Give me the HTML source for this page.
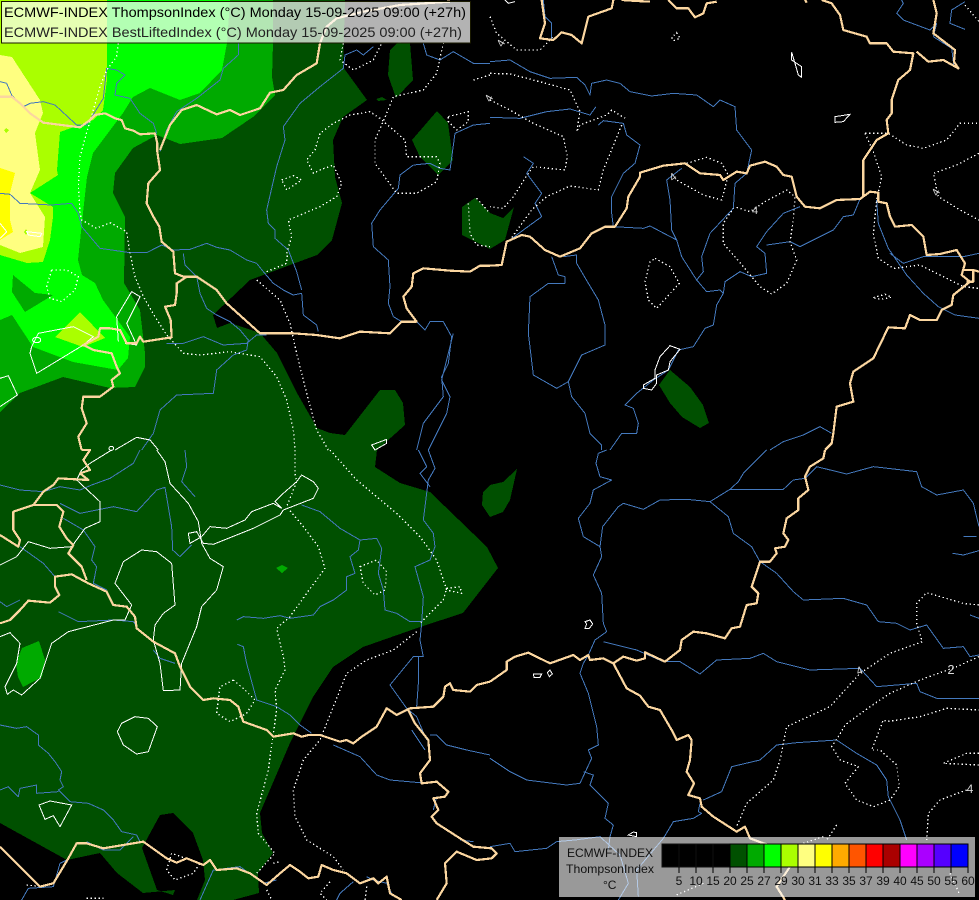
<!DOCTYPE html>
<html><head><meta charset="utf-8"><title>ECMWF-INDEX ThompsonIndex</title>
<style>
html,body{margin:0;padding:0;background:#000;width:979px;height:900px;overflow:hidden}
svg{display:block;position:absolute;left:0;top:0}
polyline,polygon.l,ellipse.l{fill:none;stroke-linejoin:round}
.map{shape-rendering:crispEdges}
.r polyline{stroke:#4479bd;stroke-width:3}
.w polyline,.w polygon,.w ellipse{fill:none;stroke:#fff;stroke-width:3}
.d polyline,.d polygon{fill:none;stroke:#fff;stroke-width:4;stroke-dasharray:4 8}
.b polyline{stroke:#fbd6a0;stroke-width:6.6}
text{font-family:"Liberation Sans",Arial,sans-serif}
</style></head><body>
<svg width="979" height="900" viewBox="0 0 979 900" xmlns="http://www.w3.org/2000/svg">
<rect width="979" height="900" fill="#000"/>
<g class="map">
<polygon fill="#005000" points="345,0 343,67 367,100 343,117 333,140 335,177 342,203 332,240 317,255 290,265 250,280 213,315 217,328 230,323 260,333 277,353 297,393 317,428 330,433 345,435 380,390 395,390 403,403 405,425 377,450 375,467 400,483 430,492 487,547 498,568 463,613 420,627 363,647 333,667 313,697 290,743 260,813 262,833 273,853 258,873 259,893 233,900 197,900 205,880 203,860 193,833 173,813 160,815 142,848 157,890 173,895 175,890 143,893 117,873 100,853 67,860 0,823 0,0"/>
<polygon fill="#005000" points="390,50 398,42 410,43 413,80 396,98 388,75"/>
<polygon fill="#005000" points="376,99 382,97 387,100 378,101"/>
<polygon fill="#005000" points="412,140 437,111 448,123 453,160 438,175 420,157"/>
<polygon fill="#005000" points="462,207 475,198 490,213 503,218 514,207 505,240 490,249 462,235"/>
<polygon fill="#005000" points="670,370 690,387 703,405 709,423 700,428 682,417 670,403 659,385"/>
<polygon fill="#005000" points="483,492 490,485 503,482 517,469 510,500 503,512 490,517 482,505"/>
<polygon fill="#00aa00" points="273,0 273,43 272,77 275,95 253,117 222,138 180,144 157,135 133,148 115,173 113,193 125,217 124,283 140,310 145,353 145,367 135,387 110,388 63,377 20,393 0,412 0,0"/>
<polygon fill="#00ff00" points="230,0 227,43 222,70 200,93 180,100 150,88 133,97 123,113 93,153 87,177 83,213 78,260 82,275 95,283 103,300 130,337 128,358 118,370 73,362 33,347 12,315 0,320 0,0"/>
<polygon fill="#00aa00" points="13,275 35,293 53,295 25,312 12,292"/>
<polygon fill="#aaff00" points="107,0 107,80 103,110 93,120 60,132 57,170 58,175 30,193 53,207 53,217 50,240 43,262 27,263 0,255 0,0"/>
<polygon fill="#aaff00" points="55,337 80,312 105,338 83,347"/>
<polygon fill="#ffff80" points="0,55 12,57 40,100 43,113 35,133 40,170 30,193 45,217 43,247 20,253 0,245"/>
<polygon fill="#ffff00" points="0,168 15,173 10,193 10,220 13,232 0,240"/>
<polygon fill="#aaff00" points="4,130 6,128 9,130 6,133"/>
<polygon fill="#aaff00" points="24,232 26,229 28,232 26,235"/>
<polygon fill="#00aa00" points="22,648 39,641 45,660 42,677 23,687 18,677 16,663"/>
<polygon fill="#00aa00" points="276,568 282,565 288,568 282,573"/>
</g>
<g class="map">
<!-- rivers -->
<g class="r" transform="scale(.33333)">
<polyline points="0,245 20,250 35,285 70,320 90,310 130,305 165,315 230,375 260,375 310,295 320,205 350,210 375,225 350,250 345,285 390,295 420,340 460,370 470,400"/>
<polyline points="715,130 715,165 670,205 660,240 590,295 530,335 500,390 480,455"/>
<polyline points="0,580 30,583 60,610 155,615 215,610 235,640 245,680 300,745 390,758 440,758 485,735 520,750 570,748 620,730 650,742 690,750 740,780 770,790 790,815 820,850 850,870 880,885 905,880 910,945 950,975 955,995"/>
<polyline points="1030,205 960,260 900,310 850,380 855,420 830,500 800,630 805,670 825,690 825,715 865,750 890,815 905,870"/>
<polyline points="550,760 555,795 590,830 600,880 620,925 650,945 690,965 720,990 745,1020 740,1050 700,1065 650,1110 640,1180 530,1185 480,1230 460,1300 425,1350"/>
<polyline points="500,1030 550,1030 610,1010 670,1035 740,1030 770,1005 800,1005"/>
<polyline points="1030,205 1035,165 1070,150 1090,165 1120,140"/>
<polyline points="1270,130 1280,165 1320,180 1360,155 1420,190 1470,190"/>
<polyline points="1240,495 1200,525 1195,565 1140,630 1115,670 1120,740 1165,780 1170,860 1165,910 1180,950 1205,965"/>
<polyline points="1240,495 1290,490 1320,505 1350,510 1365,400 1420,375 1470,370"/>
<polyline points="1250,1350 1270,1270 1330,1190 1325,1130 1345,1090 1355,1010 1330,965 1290,965 1275,990 1250,965"/>
<polyline points="1285,1350 1340,1240 1350,1190 1325,1140 1360,1000"/>
</g>
<g class="r" transform="translate(0,450) scale(.33333)">
<polyline points="0,105 60,120 130,125 180,110 240,120 275,105 330,85 400,40 420,0"/>
<polyline points="555,0 560,50 545,95 585,140"/>
<polyline points="180,160 240,190 340,170 410,185 470,120 495,112 515,230 518,300 540,320 575,285"/>
<polyline points="190,205 250,240 285,290 275,330 290,350 280,400 320,420"/>
<polyline points="0,455 20,470 60,450"/>
<polyline points="175,485 235,515 340,510 400,515 410,530"/>
<polyline points="60,290 130,340 165,380"/>
<polyline points="905,165 960,185 1020,235 1080,270 1130,265 1145,295 1135,370 1150,420 1155,480 1190,490 1230,515 1265,515"/>
<polyline points="1080,270 1075,300 1050,320 1065,370 1040,380 1040,420 1000,450 960,470 940,495 870,505 840,497 790,505 730,500 710,510"/>
<polyline points="1255,0 1280,50 1260,70 1290,110"/>
<polyline points="1285,0 1305,55 1285,90 1270,210 1300,250 1305,290 1290,330 1245,350 1270,440 1265,520 1260,570 1270,620 1240,620 1170,705 1220,775 1250,800 1280,870"/>
<polyline points="1255,620 1255,700 1250,770"/>
<polyline points="1235,840 1275,900"/>
<polyline points="1290,855 1310,855 1340,885 1400,900 1470,915"/>
<polyline points="1000,885 1080,920 1130,975 1170,990 1280,1000"/>
<polyline points="712,583 730,590 740,640 770,750 830,770 870,795 900,825 935,850"/>
<polyline points="460,600 480,625 525,640"/>
<polyline points="0,825 50,835 80,830 115,855 115,885 145,910 165,935 185,965 180,990 190,1010 175,1020 210,1055 265,1060 310,1080 340,1110 365,1145 410,1155 420,1175"/>
<polyline points="0,1020 25,1010 55,1040 60,1015 110,1005 110,1030 175,1025"/>
<polyline points="65,1350 85,1315 160,1310 180,1240 200,1230"/>
<polyline points="260,1175 310,1200 360,1200 400,1160"/>
<polyline points="600,1350 640,1260 720,1250 790,1300 830,1290"/>
<polyline points="1060,1295 1020,1330 1010,1350"/>
<polyline points="1100,1280 1120,1290 1160,1300 1180,1340"/>
<polyline points="1310,1040 1300,1080"/>
<polyline points="1380,1170 1420,1175"/>
</g>
<g class="r" transform="translate(490,0) scale(.33333)">
<polyline points="0,185 60,180 120,215 180,235 260,232 285,255 300,285 305,250 350,240 390,250 420,275 485,288 550,280 620,285 670,320 690,300 735,320 740,390 785,450 770,520 735,550 730,625 660,700 635,770 640,815 620,840 650,875 690,870 700,880 705,845 750,815 785,830 830,820 825,760 800,740 830,695 880,640 930,620"/>
<polyline points="0,352 90,355 170,335 240,327 300,345 318,320"/>
<polyline points="100,470 130,490 110,520 155,580 135,610 155,650 100,690 60,720"/>
<polyline points="325,375 340,362 400,370 410,405 450,435 435,490 400,520 365,590 365,640 370,680"/>
<polyline points="370,680 460,685 480,678 560,720 575,770 620,840"/>
<polyline points="575,505 530,540 540,600 545,690 560,720"/>
<polyline points="830,735 900,725 930,740 1030,690 1060,650 1090,645 1110,597"/>
<polyline points="185,770 205,825 225,830 225,850 175,850 120,890 115,1000 130,1125 200,1165 235,1145 275,1065 345,1035 345,975 325,900 295,850 260,790 260,765 220,770"/>
<polyline points="235,1145 245,1190 285,1240 300,1300 335,1335 335,1350"/>
<polyline points="360,1350 395,1300 440,1300 445,1270 430,1225 405,1215 440,1180 490,1140 535,1110 565,1050 610,1040 645,985 670,975 680,915 700,880"/>
<polyline points="840,1350 880,1325 940,1305 990,1280 1025,1300"/>
<polyline points="1160,600 1165,670 1195,745 1250,825 1300,880 1345,920 1395,945 1467,955"/>
<polyline points="1200,760 1240,790 1300,770 1420,770 1467,760"/>
<polyline points="1235,0 1240,10 1220,40 1240,60 1320,90 1340,70 1330,110"/>
<polyline points="1330,110 1385,145 1392,200"/>
<polyline points="1425,5 1385,30 1380,70 1425,88"/>
<polyline points="160,0 165,50 185,70 185,115"/>
</g>
<g class="r" transform="translate(490,450) scale(.33333)">
<polyline points="350,0 325,10 318,40 330,80 365,90 310,120 300,160 265,205 280,260 330,290 335,320 310,375 335,430 340,520 350,545 315,570 295,615 280,640 270,670 295,730 320,830 325,885 295,900 305,925 270,1000 230,1005 110,990 60,965 0,925"/>
<polyline points="330,290 338,230 385,170 400,160 460,178 510,150 590,148 660,155 720,118 880,118 910,90 945,85 980,50 1070,72 1150,50 1280,65 1295,110 1340,135 1420,120 1450,160 1467,230"/>
<polyline points="660,155 715,200 730,250 785,290 810,335 860,370 910,425 940,450 1060,445 1130,465 1165,515 1220,520 1260,540 1310,525 1360,595 1420,590 1440,620 1467,615"/>
<polyline points="720,118 745,95 760,70 830,0"/>
<polyline points="340,575 440,600 520,635 570,635 630,672 680,630 780,625 820,610 860,635 960,660 1110,655 1160,710 1280,700 1290,725 1340,745 1467,745"/>
<polyline points="280,965 310,975 300,1005 355,1060 345,1105 370,1125 360,1160 355,1200"/>
<polyline points="630,1060 625,1085 635,1090 610,1105 550,1115 520,1165 440,1260 445,1340"/>
<polyline points="640,1050 695,1025 725,950 810,930 860,885 920,878 1040,870 1100,910 1160,945 1190,990 1195,1040 1230,1110 1250,1170"/>
<polyline points="0,1190 60,1180 75,1205 170,1195 200,1175 255,1170 330,1160 390,1215 415,1300 385,1350"/>
<polyline points="1420,260 1460,260"/>
<polyline points="1388,310 1420,315 1467,302"/>
<polyline points="1440,495 1467,505"/>
</g>
<!-- white solid -->
<g class="w" transform="scale(.33333)">
<ellipse cx="110" cy="1020" rx="12" ry="8"/>
<polygon points="95,1040 115,1000 220,980 280,1010 250,1035 110,1120 90,1060"/>
<polyline points="355,1025 350,950 395,875 420,890 380,970 410,1035 375,1030"/>
<polyline points="0,1135 25,1127 52,1185 0,1220"/>
<polygon points="1115,1335 1160,1318 1160,1330 1125,1350"/>
<polyline points="345,1350 410,1312 450,1320 475,1350"/>
<ellipse cx="334" cy="1345" rx="7" ry="6"/>
<polyline points="0,670 20,695 0,715"/>
<polygon points="80,695 125,700 120,710 85,705"/>
</g>
<g class="w" transform="translate(0,450) scale(.33333)">
<polyline points="470,0 495,35 510,100 565,160 595,215 605,280 630,325 670,350 650,420 605,470 590,530 545,640 540,720 490,722 480,640 460,570 465,525 490,490 525,465 515,340 470,305 425,300 370,335 345,400 395,465 375,510 340,510 205,545 155,580 120,685 65,735 40,720 22,733 15,710 50,640 60,580 30,548 0,560"/>
<polyline points="335,0 270,40 245,60 230,90 300,155 300,215 255,235 215,290 150,295 85,275 50,320 0,345"/>
<polygon points="565,250 590,245 610,280 640,283 685,265 760,235 840,195 850,180 940,145 955,115 940,95 905,75 890,95 850,130 825,155 845,175 820,160 755,185 735,210 680,235 630,230 605,260 570,280"/>
<polygon points="405,800 445,805 472,830 445,905 410,912 370,885 352,845 365,820"/>
<polygon points="117,1065 150,1053 215,1065 180,1130 160,1097 135,1108"/>
</g>
<g class="w" transform="translate(490,0) scale(.33333)">
<polygon points="905,157 905,180 935,200 935,232 925,225 915,190"/>
<polygon points="1035,350 1080,343 1060,365 1035,367"/>
<polyline points="45,0 55,10 75,5"/>
<polygon points="540,1037 570,1048 540,1085 535,1110 500,1125 500,1150 485,1170 460,1165 460,1155 495,1135 495,1110 510,1070"/>
</g>
<g class="w" transform="translate(490,450) scale(.33333)">
<polygon points="285,515 300,510 308,522 298,535 285,535 290,522"/>
<polygon points="130,672 155,672 150,682 132,682"/>
<polygon points="180,660 187,672 178,680 172,668"/>
<polygon points="415,1155 430,1146 440,1148 440,1160"/>
</g>
<!-- white dotted -->
<g class="d" transform="scale(.33333)">
<polyline points="355,130 350,170 320,210 300,260 280,330 265,380 240,470 235,560 240,640 245,660 290,685 330,668 380,695 390,760 405,830 430,890 465,950 500,1005 550,1060 600,1065 690,1055 780,1070 830,1130 860,1200 880,1290 885,1350"/>
<polyline points="770,840 840,900 870,970 890,1060 920,1180 950,1290 985,1350"/>
<polygon points="155,810 200,810 235,830 225,870 185,905 150,895 140,860"/>
<polyline points="860,760 875,710 865,660 960,620 1010,590 1025,550 1000,495 960,510 940,520 920,480 945,450 960,400 1000,370 1050,345 1110,335 1140,355 1215,420 1220,470 1255,470 1310,470 1320,490 1310,545 1250,580 1190,580 1125,490 1125,420 1160,340 1180,290 1270,270 1310,220 1330,130"/>
<polygon points="845,540 880,527 905,540 860,570"/>
<polyline points="1030,130 1020,180 1060,210 1120,180 1145,130"/>
<polyline points="800,815 860,790 862,760"/>
<polyline points="1420,240 1470,225"/>
<polyline points="1405,610 1410,700 1430,735 1470,740"/>
<polyline points="1430,595 1470,640"/>
<polygon points="1345,350 1405,335 1405,365 1370,390 1345,365"/>
</g>
<g class="d" transform="translate(0,450) scale(.33333)">
<polyline points="885,0 885,70 890,95 860,170 910,230 955,290 975,355 920,430 870,500 830,535 850,620 855,660 825,720 830,780 820,850 805,960 770,1090 775,1150 825,1210 770,1270"/>
<polyline points="990,0 1070,90 1190,190 1260,260 1310,330 1340,420 1385,430 1380,410 1340,415 1330,450 1290,490 1260,520"/>
<polyline points="1250,545 1180,600 1100,630 1040,670 1000,770 960,870 910,930 880,1020 885,1100 920,1170 1000,1220 1030,1260"/>
<polygon points="1080,350 1130,330 1160,365 1155,420 1125,435 1090,400"/>
<polygon points="700,690 660,710 650,790 690,815 740,790 765,750 730,715"/>
<polygon points="515,1210 500,1260 525,1290 580,1270 600,1240"/>
<polyline points="80,1305 125,1310"/>
<polyline points="990,1295 960,1330 980,1350"/>
<polyline points="1100,1310 1095,1350"/>
<polyline points="800,1320 815,1350"/>
<polyline points="260,1345 310,1345"/>
<polyline points="820,1240 840,1235"/>
</g>
<g class="d" transform="translate(490,0) scale(.33333)">
<polyline points="0,50 20,100 80,150 150,150 190,110"/>
<polyline points="0,220 60,222 130,240 240,270 270,335 260,395 270,375 350,345 365,330 405,355"/>
<polyline points="0,300 60,330 130,370 220,410 232,470 225,510 130,500 105,535 70,590 40,625 0,620"/>
<polyline points="395,375 340,510 325,570 240,558 170,590 125,630 60,720"/>
<polygon points="560,98 570,115 550,122 545,112"/>
<polyline points="590,490 650,472 695,490 715,525 695,600 640,585 560,540"/>
<polyline points="740,622 780,635 825,605 890,570 915,590 910,660 900,725 920,780 890,850 845,882 810,860 760,800 700,730 700,670 730,625"/>
<polygon points="495,775 540,800 568,850 500,925 475,900 465,845 480,785"/>
<polyline points="1125,400 1150,455 1175,530 1160,600 1150,700 1165,775 1210,805 1290,795 1340,820 1420,860 1467,865"/>
<polyline points="1125,400 1195,400 1250,435 1300,445 1370,420 1410,370 1467,370"/>
<polyline points="1467,460 1400,495 1330,520 1345,590 1410,630 1467,660"/>
<polygon points="1150,893 1185,883 1205,892 1170,898"/>
<polyline points="1425,15 1467,65"/>
</g>
<g class="d" transform="translate(490,450) scale(.33333)">
<polyline points="1467,620 1400,650 1290,690 1200,730 1140,770 1065,825 1045,860 1025,890 1050,930 1105,950 1065,1000 1100,1050 1150,1070 1200,1050 1228,1010 1220,945 1170,900 1145,900 1180,810 1190,815 1290,800 1370,775 1467,780"/>
<polyline points="1467,465 1420,460 1310,428 1280,460 1280,520 1297,575 1200,610 1110,670 1020,770 890,830 870,930 850,990 770,1060 740,1130"/>
<polyline points="1467,910 1430,910 1360,940 1467,945"/>
<polyline points="1430,1020 1350,1050 1315,1090 1310,1170"/>
<polyline points="1040,1125 1010,1170"/>
<polyline points="560,1335 640,1300"/>
<polyline points="1100,1200 1000,1230"/>
<polyline points="1000,1160 940,1180"/>
<polyline points="1380,1270 1410,1335"/>
</g>
<!-- borders -->
<g class="b" transform="scale(.33333)">
<polyline points="0,290 35,290 60,310 90,340 130,368 185,375 240,382 270,360 285,345 315,340 345,355 365,360 375,385 400,392 420,403 465,400 472,430 472,455 480,510 445,550 440,610 460,650 478,680 485,725 520,755 525,820 550,830 590,830 650,870 680,910 730,955 780,1000 880,1000 950,1005 1020,1015 1080,995 1170,1000 1205,965 1250,965 1220,925 1210,890 1235,860 1240,820 1270,805 1350,812 1410,815 1440,797 1470,797"/>
<polyline points="560,830 530,850 530,880 525,915 495,920 512,960 515,1012 430,1025 420,1010 410,1030 380,1030 360,990 330,985 300,985 295,1010 250,1035 280,1050 335,1060 350,1100 360,1120 335,1140 340,1160 300,1190 250,1190 245,1225 260,1270 235,1310 245,1350"/>
<polyline points="480,450 510,375 545,330 590,315 650,343 690,330 720,345 780,325 810,278 850,270 890,225 950,190 960,130 980,80 1010,55 1090,35 1200,15 1350,5"/>
</g>
<g class="b" transform="translate(0,450) scale(.33333)">
<polyline points="1470,695 1430,705 1410,725 1360,720 1350,700 1335,710 1330,740 1300,770 1230,775 1190,795 1160,775 1130,830 1085,860 1060,880 1040,870 1020,875 960,855 925,855 905,860 880,850 820,860 800,840 730,815 715,770 690,750 640,745 610,750 590,730 570,710 540,650 525,610 460,575 410,535 405,500 380,470 340,465 320,425 265,400 215,373 165,380 165,410 178,435 150,458 85,452 60,480 30,510 0,520"/>
<polyline points="245,0 270,0 250,30 270,60 240,70 265,90 175,85 160,105 130,125 100,165 40,185 40,240 60,270 55,290 0,255"/>
<polyline points="100,165 170,165 190,185 178,230 200,265 220,285 205,310 245,350 260,390"/>
<polyline points="0,1190 60,1250 120,1310 160,1300 205,1225 230,1180 260,1180 310,1195 370,1185 430,1175 500,1225 530,1238 560,1225 610,1245 630,1230 650,1260 710,1255 750,1270 800,1305 840,1270 870,1245 900,1265 925,1285 955,1280 965,1245 1000,1260 1040,1270 1080,1300 1120,1285 1135,1300 1160,1280 1170,1330 1205,1350"/>
<polyline points="1225,780 1245,820 1285,870 1290,930 1260,970 1265,1000 1310,995 1345,1025 1335,1040 1300,1045 1315,1080 1295,1100 1310,1120 1380,1165 1420,1190 1475,1195 1490,1210 1475,1225 1430,1230 1370,1205 1335,1240 1340,1300 1310,1350"/>
</g>
<g class="b" transform="translate(490,0) scale(.33333)">
<polyline points="0,797 35,795 50,725 95,705 120,710 165,750 210,770 270,745 305,700 345,680 375,680 410,625 415,590 450,530 450,518 520,497 585,490 630,520 690,525 700,540 740,515 770,520 780,497 825,485 860,500 880,525 905,530 920,590 945,620 990,625 1040,600 1110,597 1140,575 1165,578 1165,605 1190,610 1200,650 1215,680 1265,675 1300,710 1310,765 1350,762 1400,750 1425,790 1415,825 1440,845 1390,885 1385,915 1355,930 1340,960 1290,960 1260,945 1245,985 1195,982 1150,1075 1090,1115 1080,1150 1090,1205 1040,1220 1030,1300 1025,1330 1005,1350"/>
<polyline points="155,0 165,70 150,115 190,120 215,97 245,105 275,130 295,50 365,25 370,0"/>
<polyline points="395,0 440,3 480,5"/>
<polyline points="535,0 560,25 595,25 615,52 640,40 650,10 680,5"/>
<polyline points="945,0 950,8"/>
<polyline points="995,0 1025,10 1050,45 1060,90 1130,110 1140,130 1190,130 1210,155 1270,160 1260,210 1225,240 1205,300 1205,340 1190,360 1195,400 1160,420 1120,480 1120,590"/>
<polyline points="1330,0 1340,40 1330,100 1395,150 1392,185 1405,205 1360,180 1315,185 1280,155"/>
<polyline points="1420,810 1450,810 1467,815"/>
<polyline points="1450,810 1450,845 1430,845"/>
</g>
<g class="b" transform="translate(490,450) scale(.33333)">
<polyline points="1005,0 1000,25 960,50 945,80 955,120 925,145 925,180 890,205 880,250 895,270 885,290 855,295 860,310 840,335 810,335 785,410 805,430 800,460 770,465 750,530 725,535 705,565 650,550 610,545 575,570 570,600 525,635 465,607 465,625 440,632 400,620 370,640 410,715 450,737 475,770 510,780 545,840 560,870 595,855 605,870 600,930 590,965 612,1000 595,1035 630,1045 635,1070 670,1100 740,1145 765,1130 780,1165 820,1180 855,1190 900,1250 860,1310 885,1350"/>
<polyline points="370,640 340,625 300,630 295,615 270,630 250,615 180,640 115,608 75,620 50,635 50,660 0,695"/>
</g>
</g>
<!-- contour labels -->
<g fill="#d8d8d8" font-size="11">
<text transform="translate(504,45) rotate(-60)" text-anchor="middle">4</text>
<text transform="translate(492,100) rotate(-60)" text-anchor="middle">4</text>
<text transform="translate(675,180) rotate(-35)" text-anchor="middle">4</text>
<text x="755" y="214" text-anchor="middle">4</text>
<text transform="translate(939,194) rotate(-60)" text-anchor="middle">4</text>
<text transform="translate(861,674) rotate(-25)" text-anchor="middle">4</text>
<text x="951" y="674" font-size="13" text-anchor="middle">2</text>
<text x="970" y="793" font-size="12" text-anchor="middle">4</text>
</g>
<!-- title box -->
<rect x="1.5" y="1.5" width="469" height="41.5" fill="#fff" fill-opacity=".7" stroke="#1a1a00" stroke-width="1"/>
<text x="4" y="17" font-size="14" fill="#000" textLength="462" lengthAdjust="spacingAndGlyphs">ECMWF-INDEX ThompsonIndex (°C) Monday 15-09-2025 09:00 (+27h)</text>
<text x="4" y="37" font-size="14" fill="#222" textLength="458" lengthAdjust="spacingAndGlyphs">ECMWF-INDEX BestLiftedIndex (°C) Monday 15-09-2025 09:00 (+27h)</text>
<!-- legend -->
<rect x="559" y="837" width="416" height="60" fill="#fff" fill-opacity=".6"/>
<g shape-rendering="crispEdges">
<g stroke="#000" stroke-width="1">
<rect x="662" y="844" width="17" height="23" fill="#000" stroke="#111"/>
<rect x="679" y="844" width="17" height="23" fill="#000" stroke="#111"/>
<rect x="696" y="844" width="17" height="23" fill="#000" stroke="#111"/>
<rect x="713" y="844" width="17" height="23" fill="#000" stroke="#111"/>
<rect x="730" y="844" width="17" height="23" fill="#005000"/>
<rect x="747" y="844" width="17" height="23" fill="#00aa00"/>
<rect x="764" y="844" width="17" height="23" fill="#00ff00"/>
<rect x="781" y="844" width="17" height="23" fill="#aaff00"/>
<rect x="798" y="844" width="17" height="23" fill="#ffff80"/>
<rect x="815" y="844" width="17" height="23" fill="#ffff00"/>
<rect x="832" y="844" width="17" height="23" fill="#ffaa00"/>
<rect x="849" y="844" width="17" height="23" fill="#ff5500"/>
<rect x="866" y="844" width="17" height="23" fill="#ff0000"/>
<rect x="883" y="844" width="17" height="23" fill="#aa0000"/>
<rect x="900" y="844" width="17" height="23" fill="#ff00ff"/>
<rect x="917" y="844" width="17" height="23" fill="#aa00ff"/>
<rect x="934" y="844" width="17" height="23" fill="#5500ff"/>
<rect x="951" y="844" width="17" height="23" fill="#0000ff"/>
</g>
<path stroke="#000" fill="none" d="M679 867V873M696 867V873M713 867V873M730 867V873M747 867V873M764 867V873M781 867V873M798 867V873M815 867V873M832 867V873M849 867V873M866 867V873M883 867V873M900 867V873M917 867V873M934 867V873M951 867V873M968 867V873"/>
</g>
<g font-size="12" fill="#111" text-anchor="middle">
<text x="679" y="885">5</text><text x="696" y="885">10</text><text x="713" y="885">15</text><text x="730" y="885">20</text><text x="747" y="885">25</text><text x="764" y="885">27</text><text x="781" y="885">29</text><text x="798" y="885">30</text><text x="815" y="885">31</text><text x="832" y="885">33</text><text x="849" y="885">35</text><text x="866" y="885">37</text><text x="883" y="885">39</text><text x="900" y="885">40</text><text x="917" y="885">45</text><text x="934" y="885">50</text><text x="951" y="885">55</text><text x="968" y="885">60</text>
</g>
<g font-size="12" fill="#111">
<text x="567" y="857" textLength="86" lengthAdjust="spacingAndGlyphs">ECMWF-INDEX</text>
<text x="566" y="873" textLength="88" lengthAdjust="spacingAndGlyphs">ThompsonIndex</text>
<text x="603" y="889" font-size="12">°C</text>
</g>
</svg>
</body></html>
